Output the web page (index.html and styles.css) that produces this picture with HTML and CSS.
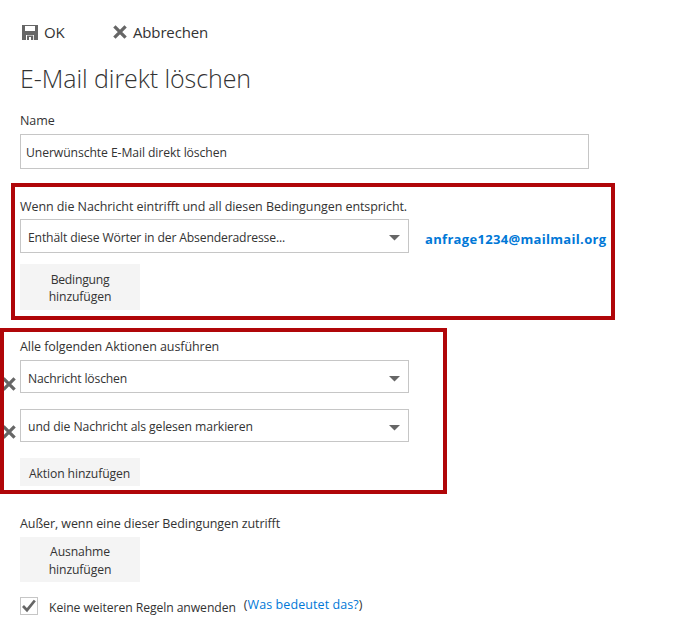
FILE: index.html
```
<!DOCTYPE html>
<html lang="de">
<head>
<meta charset="utf-8">
<title>E-Mail direkt löschen</title>
<link rel="stylesheet" href="styles.css">
</head>
<body>
<svg width="0" height="0" class="defs"><symbol id="cross" viewBox="0 0 14 14"><path d="M1.4 1.4L12.6 12.6M12.6 1.4L1.4 12.6" stroke="currentColor" stroke-width="3.3"/></symbol><symbol id="arrow" viewBox="0 0 11 6"><path d="M0 0H11L5.5 5.5Z" fill="currentColor"/></symbol></svg>
<div class="toolbar">
  <div class="tool save"><svg class="disk" viewBox="0 0 16 15"><path fill="currentColor" fill-rule="evenodd" d="M0 0H16V15H12V10H4V15H0ZM3 1V6H13V1Z"/><path fill="currentColor" d="M5 10.6H11.2V15H9V12H7V15H5Z"/></svg><span class="t-ok">OK</span></div>
  <div class="tool"><svg class="cross"><use href="#cross"/></svg><span class="t-cancel">Abbrechen</span></div>
</div>
<h1><span>E-Mail direkt löschen</span></h1>
<div class="name">
  <div class="label"><span class="t-name">Name</span></div>
  <div class="input"><span class="t-input">Unerwünschte E-Mail direkt löschen</span></div>
</div>
<section class="frame conditions">
  <div class="label"><span class="t-when">Wenn die Nachricht eintrifft und all diesen Bedingungen entspricht.</span></div>
  <div class="line">
    <div class="select"><span class="t-from">Enthält diese Wörter in der Absenderadresse...</span><svg class="arrow"><use href="#arrow"/></svg></div>
    <a class="mail"><span>anfrage1234@mailmail.org</span></a>
  </div>
  <div class="button tall"><span class="t-cond">Bedingung</span><span class="t-add">hinzufügen</span></div>
</section>
<section class="frame actions">
  <div class="label"><span class="t-all">Alle folgenden Aktionen ausführen</span></div>
  <div class="action"><svg class="remove"><use href="#cross"/></svg><div class="select"><span class="t-del">Nachricht löschen</span><svg class="arrow"><use href="#arrow"/></svg></div></div>
  <div class="action"><svg class="remove"><use href="#cross"/></svg><div class="select"><span class="t-read">und die Nachricht als gelesen markieren</span><svg class="arrow"><use href="#arrow"/></svg></div></div>
  <div class="button"><span class="t-act">Aktion hinzufügen</span></div>
</section>
<section class="except">
  <div class="label"><span class="t-except">Außer, wenn eine dieser Bedingungen zutrifft</span></div>
  <div class="button tall"><span class="t-exc">Ausnahme</span><span class="t-add">hinzufügen</span></div>
</section>
<div class="stop">
  <div class="check"><svg viewBox="0 0 16 15"><path d="M2 8L6 12.2L13.8 2.5" fill="none" stroke="currentColor" stroke-width="2.7"/></svg></div>
  <span class="t-stop">Keine weiteren Regeln anwenden</span>
  <span class="help">(<a>Was bedeutet das?</a>)</span>
</div>
</body>
</html>
```
FILE: styles.css
```
* { box-sizing: border-box; }
body { margin: 0; width: 696px; height: 642px; overflow: hidden; background: #fff; color: #333; font: 12.5px/18px "Open Sans", "Noto Sans", sans-serif; white-space: nowrap; }
svg { display: block; color: #666; flex: none; }
.defs { position: absolute; }
.toolbar { display: flex; padding: 22px 0 0 22px; height: 43px; }
.tool { display: flex; align-items: center; height: 20px; font-size: 15px; letter-spacing: -.15px; }
.save { width: 91px; }
.disk { width: 16px; height: 15px; margin: 1px 6px 0 0; }
.cross { width: 14px; height: 14px; margin-right: 6px; }
h1 { margin: 15px 0 0 20px; height: 40px; line-height: 40px; font-size: 25px; font-weight: 300; letter-spacing: -.07px; }
.name { margin: 14px 0 0 20px; }
.label { height: 18px; letter-spacing: -.07px; }
.input { width: 569px; height: 35px; margin-top: 4px; padding: 0 5px; border: 1px solid #c6c6c6; font-size: 12.2px; line-height: 35px; letter-spacing: -.09px; }
.frame { border: 4px solid #b00609; overflow: hidden; }
.conditions { width: 604px; height: 137px; margin: 14px 0 0 11px; padding: 11px 0 0 5px; }
.line { display: flex; margin-top: 3px; }
.select { display: flex; align-items: center; justify-content: space-between; width: 389px; height: 34px; padding: 3px 8px 0 7px; border: 1px solid #c6c6c6; font-size: 12.2px; }
.arrow { width: 11px; height: 6px; }
.t-from { letter-spacing: -.16px; }
.t-del { letter-spacing: -.17px; }
.t-read { letter-spacing: -.09px; }
.mail { height: 18px; margin: 11px 0 0 16px; color: #0078d7; font-size: 13px; font-weight: 700; letter-spacing: .32px; }
.button { display: flex; flex-direction: column; align-items: center; justify-content: center; width: 120px; height: 28px; padding-top: 3px; background: #f4f4f4; font-size: 12.2px; letter-spacing: -.12px; }
.button.tall { height: 46px; padding-top: 2px; line-height: 17px; }
.t-cond { letter-spacing: -.25px; }
.t-act { margin-right: 1px; }
.conditions .button { margin-top: 11px; }
.actions { width: 447px; height: 166px; margin-top: 8px; padding: 6px 0 0 16px; }
.action { display: flex; margin: 4px 0 16px -16px; }
.action + .action { margin-top: 0; }
.action .select { height: 33px; padding-top: 4px; }
.action + .action .select span { margin-top: -1px; }
.remove { width: 14px; height: 14px; margin: 17px 4px 0 -2px; }
.action + .action .remove { margin-top: 16px; }
.except { margin: 21px 0 0 20px; }
.except .label { letter-spacing: -.09px; }
.except .button { height: 45px; margin-top: 4px; line-height: 18px; }
.stop { display: flex; margin: 15px 0 0 20px; }
.check { width: 18px; height: 18px; margin: 0 11px 0 0; border: 1px solid #c6c6c6; }
.check svg { width: 16px; height: 15px; }
.t-stop { margin-top: 2px; font-size: 12.2px; letter-spacing: -.08px; }
.help { margin: -1px 0 0 8px; letter-spacing: .08px; }
.help a { color: #0078d7; }
```
